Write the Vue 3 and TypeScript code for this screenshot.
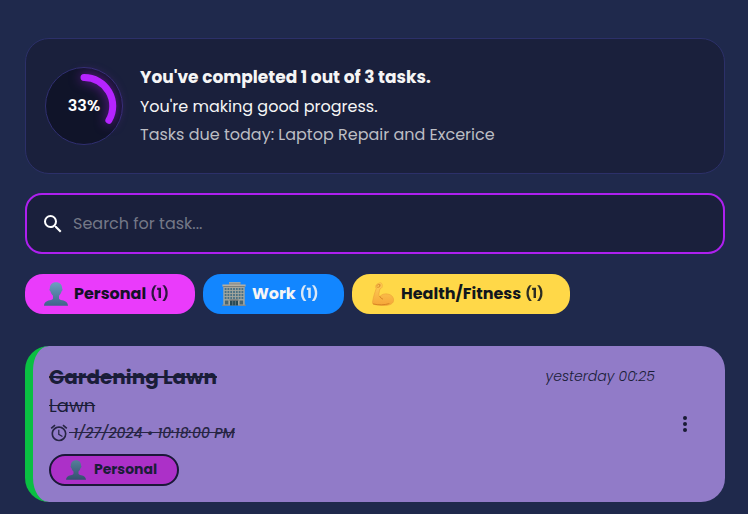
<script setup lang="ts">
interface Category {
  name: string
  count: number
  icon: 'person' | 'building' | 'muscle'
  tone: string
}

const categories: Category[] = [
  { name: 'Personal', count: 1, icon: 'person', tone: 'pink' },
  { name: 'Work', count: 1, icon: 'building', tone: 'blue' },
  { name: 'Health/Fitness', count: 1, icon: 'muscle', tone: 'yellow' },
]
const windowColumns = [4.3, 7.1, 9.9, 12.7, 15.5, 18.3, 21.1]
const windowRows = [6, 9, 12, 15]
</script>

<template>
  <svg class="defs" aria-hidden="true">
    <defs>
      <linearGradient id="person-fill" x1="0" y1="0" x2="0" y2="1">
        <stop offset="0" stop-color="#6b9fc0" />
        <stop offset="1" stop-color="#41638a" />
      </linearGradient>
      <linearGradient id="arm-fill" x1="0" y1="0" x2="0" y2="1">
        <stop offset="0" stop-color="#ffcf58" />
        <stop offset="1" stop-color="#f5a638" />
      </linearGradient>
      <symbol id="person" viewBox="0 0 24 24">
        <path fill="url(#person-fill)" d="M12 .2c3.8 0 6.3 2.5 6.1 6.4.8.3.5 2.5-.6 3-.4 1.7-1.3 3.2-2.5 4.2v2.4c0 1.1 1.2 1.6 3.3 2.1 3.5.8 5.4 1.9 5.700 5.500H0c.3-3.6 2.200-4.700 5.700-5.500C7.800 17.800 9 17.300 9 16.200v-2.400c-1.200-1-2.100-2.500-2.500-4.200-1.100-.5-1.400-2.700-.6-3C5.700 2.700 8.200.2 12 .2z" />
      </symbol>
      <symbol id="muscle" viewBox="0 0 24 24">
        <path fill="url(#arm-fill)" stroke="#e99a34" stroke-width=".5" d="M6.300 1.900 8.900.9c1-.2 1.700.2 2 1 .5 1.300.5 2.700-.1 3.700-.5.8-1.200 1.200-2 1.400l-.9 4.900c-.1 1.200.2 2 .9 2.700 2-2.300 4.600-3.100 7.700-2.600 4.100.6 6.100 3.100 6.100 6.100 0 3.200-3 5.100-7.900 5.300-4.700.2-8.900-.1-12-1.100-1-.3-1.400-1.200-1.200-2.300C2.200 15 4 10.200 5.200 6.600 4.300 5.200 4.300 3 6.300 1.900z" />
        <path fill="none" stroke="#cf7b20" stroke-width=".8" stroke-linecap="round" d="M6 3.300l1.500-.7 1.500.3M5.800 5c1 .5 1.900.3 3-.4l.1-1.700M8.800 14.500c.6 1.200 1.600 2 2.800 2.500M2.500 22c5 1.400 10.900 1 15.500-.3" />
      </symbol>
      <symbol id="building" viewBox="0 0 24 24">
        <path fill="#878b8b" d="M7 .5h11.500v3H7z" />
        <path fill="#b4b0a4" d="M7 .2h11.500v1H7zM.4 2.400h23.200v2.200H.4z" />
        <path fill="#a5a79e" d="M1.300 4h21.400v19.500H1.300z" />
        <g v-for="y in windowRows" :key="y" fill="#4b7184">
          <rect v-for="x in windowColumns" :key="x" :x="x - 1.6" :y="y" width="1.800" height="2.100" />
        </g>
        <path fill="#6d7170" d="M1.300 4.300h21.400v.7H1.300zM7.500 17.500h9v1.300h-9z" />
        <path fill="#264854" d="M8 18.800h8v4.700H8z" />
        <path fill="#4b6670" d="M2.900 18.500h3.500v4H2.900zM17.600 18.500h3.500v4h-3.500z" />
        <path stroke="#829297" stroke-width=".6" d="M10.700 18.800v4.700M13.400 18.800v4.700" />
        <path fill="#8c8880" d="M0 22.800h7.800v1H0zm16.200 0H24v1h-7.800z" />
      </symbol>
    </defs>
  </svg>

  <main class="page">
    <section class="progress-card">
      <div class="ring">
        <svg class="arc" viewBox="1 1 76 76">
          <path d="M39 10.500A28.500 28.500 0 0 1 63.900 53.300" />
        </svg>
        <span class="percent">33%</span>
      </div>
      <div class="summary">
        <h2>You've completed 1 out of 3 tasks.</h2>
        <p class="note">You're making good progress.</p>
        <p class="due">Tasks due today: Laptop Repair and Excerice</p>
      </div>
    </section>

    <label class="search">
      <svg viewBox="0 0 24 24"><path d="M15.500 14h-.79l-.28-.27A6.471 6.471 0 0 0 16 9.500 6.500 6.500 0 1 0 9.500 16c1.610 0 3.090-.59 4.230-1.570l.27.28v.79l5 4.990L20.490 19l-4.990-5zm-6 0C7.010 14 5 11.990 5 9.500S7.010 5 9.500 5 14 7.010 14 9.500 11.990 14 9.500 14z" /></svg>
      <input type="text" placeholder="Search for task...">
    </label>

    <nav class="chips">
      <button v-for="c in categories" :key="c.name" class="chip" :class="c.tone">
        <svg class="emoji"><use :href="'#' + c.icon" /></svg>
        <span class="chip-name">{{ c.name }}</span>
        <span class="count">({{ c.count }})</span>
      </button>
    </nav>

    <article class="task">
      <div class="task-body">
        <div class="task-head">
          <h3>Gardening Lawn</h3>
          <time class="created">yesterday 00:25</time>
        </div>
        <p class="description">Lawn</p>
        <div class="deadline">
          <svg viewBox="0 0 24 24"><path d="m22 5.720-4.600-3.860-1.290 1.530 4.600 3.860L22 5.720zM7.880 3.390 6.600 1.860 2 5.710l1.290 1.530 4.590-3.850zM12.500 8H11v6l4.750 2.850.75-1.230-4-2.370V8zM12 4c-4.970 0-9 4.030-9 9s4.020 9 9 9a9 9 0 1 0 0-18zm0 16c-3.870 0-7-3.130-7-7s3.130-7 7-7 7 3.130 7 7-3.130 7-7 7z" /></svg>
          <span class="date">&nbsp;1/27/2024 • 10:18:00 PM</span>
        </div>
        <div class="tag">
          <svg class="emoji"><use href="#person" /></svg>
          <span>Personal</span>
        </div>
      </div>
      <button class="menu" aria-label="Task menu">
        <svg viewBox="0 0 24 24"><circle cx="12" cy="6" r="2" /><circle cx="12" cy="12" r="2" /><circle cx="12" cy="18" r="2" /></svg>
      </button>
    </article>
  </main>
</template>

<style>
body {
  background: #1f294c;
  overflow: hidden;
}
</style>

<style scoped>
* { box-sizing: border-box; }

.defs {
  position: absolute;
  width: 0;
  height: 0;
}

.page {
  display: flex;
  flex-direction: column;
  width: 725px;
  height: 514px;
  padding: 38px 0 0 25px;
  color: #f5f5f5;
  font-family: Poppins, Inter, "Open Sans", sans-serif;
  white-space: nowrap;
}

h2, h3, p { margin: 0; }
svg { display: block; flex: none; }
button { font: inherit; border: 0; }

.progress-card {
  display: flex;
  align-items: center;
  gap: 17px;
  height: 136px;
  padding-left: 19px;
  border: 1px solid #2c3069;
  border-radius: 24px;
  background: #1a203c;
}

.ring {
  display: grid;
  place-items: center;
  width: 78px;
  height: 78px;
  border: 1px solid #302f71;
  border-radius: 50%;
  background: #101429;
}

.arc, .percent { grid-area: 1 / 1; }
.arc {
  width: 76px;
  height: 76px;
  overflow: visible;
  fill: none;
  stroke: #b624ff;
  stroke-width: 7;
  stroke-linecap: round;
  filter: drop-shadow(0 0 6px #b624ff90);
}
.percent {
  padding-bottom: 2px;
  color: #fff;
  font-size: 16px;
  font-weight: 600;
}

h2 {
  padding-bottom: 2px;
  font-size: 17px;
  font-weight: 700;
  line-height: 27px;
}
.note, .due {
  font-size: 16px;
  line-height: 28px;
}
.due { color: #bcbdc3; }

.search {
  display: flex;
  align-items: center;
  gap: 8px;
  height: 61px;
  margin-top: 19px;
  padding: 0 14px;
  border: 2px solid #ad20ef;
  border-radius: 17px;
  background: #1a203c;
}
.search svg {
  width: 24px;
  height: 24px;
  fill: #fff;
}
.search input {
  flex: 1;
  padding: 0;
  border: 0;
  outline: 0;
  background: none;
  font: inherit;
  font-size: 16px;
}
.search input::placeholder { color: #747887; opacity: 1; }

.chips {
  display: flex;
  gap: 8px;
  margin-top: 20px;
}
.chip {
  display: flex;
  align-items: center;
  height: 40px;
  padding: 0 0 0 19px;
  border-radius: 18px;
  font-size: 16px;
  font-weight: 700;
}
.chip .emoji { width: 24px; height: 24px; margin-right: 6px; }
.chip-name, .count { padding-bottom: 2px; }
.count { margin-left: 4px; font-size: 14px; opacity: 0.88; }
.pink { width: 170px; background: #ea3bfb; color: #141027; }
.blue { width: 141px; background: #1286ff; color: #f5f5f5; }
.yellow { width: 218px; background: #ffd848; color: #11161d; }

.task {
  display: flex;
  align-items: center;
  height: 156px;
  margin-top: 32px;
  padding: 16px 28px 16px 16px;
  border-left: 8px solid #0abf42;
  border-radius: 24px;
  background: #917bc8;
  color: #1a1d38;
}
.task-body { width: 606px; align-self: flex-start; }
.task-head {
  display: flex;
  justify-content: space-between;
  align-items: center;
  height: 30px;
}
h3 {
  font-size: 20px;
  font-weight: 700;
  text-decoration: line-through;
}
.created {
  padding-bottom: 2px;
  font-size: 14px;
  font-weight: 300;
  font-style: italic;
}
.description {
  font-size: 18px;
  line-height: 28px;
  text-decoration: line-through;
}
.deadline {
  display: flex;
  align-items: center;
  height: 26px;
  font-size: 14px;
  font-weight: 500;
  font-style: italic;
  color: #272544;
}
.deadline svg { width: 20px; height: 20px; fill: currentColor; }
.date { text-decoration: line-through; }
.tag {
  display: flex;
  align-items: center;
  width: 130px;
  height: 32px;
  margin-top: 8px;
  padding-left: 15px;
  border: 2px solid #1a1838;
  border-radius: 16px;
  background: #ac30c8;
  font-size: 14px;
  font-weight: 700;
}
.tag span { padding-bottom: 2px; }
.tag .emoji { width: 20px; height: 20px; margin-right: 8px; filter: brightness(0.8); }
.menu {
  display: grid;
  place-items: center;
  width: 24px;
  height: 24px;
  margin-left: 18px;
  padding: 0;
  background: none;
}
.menu svg { width: 24px; height: 24px; fill: #191b34; }
</style>
